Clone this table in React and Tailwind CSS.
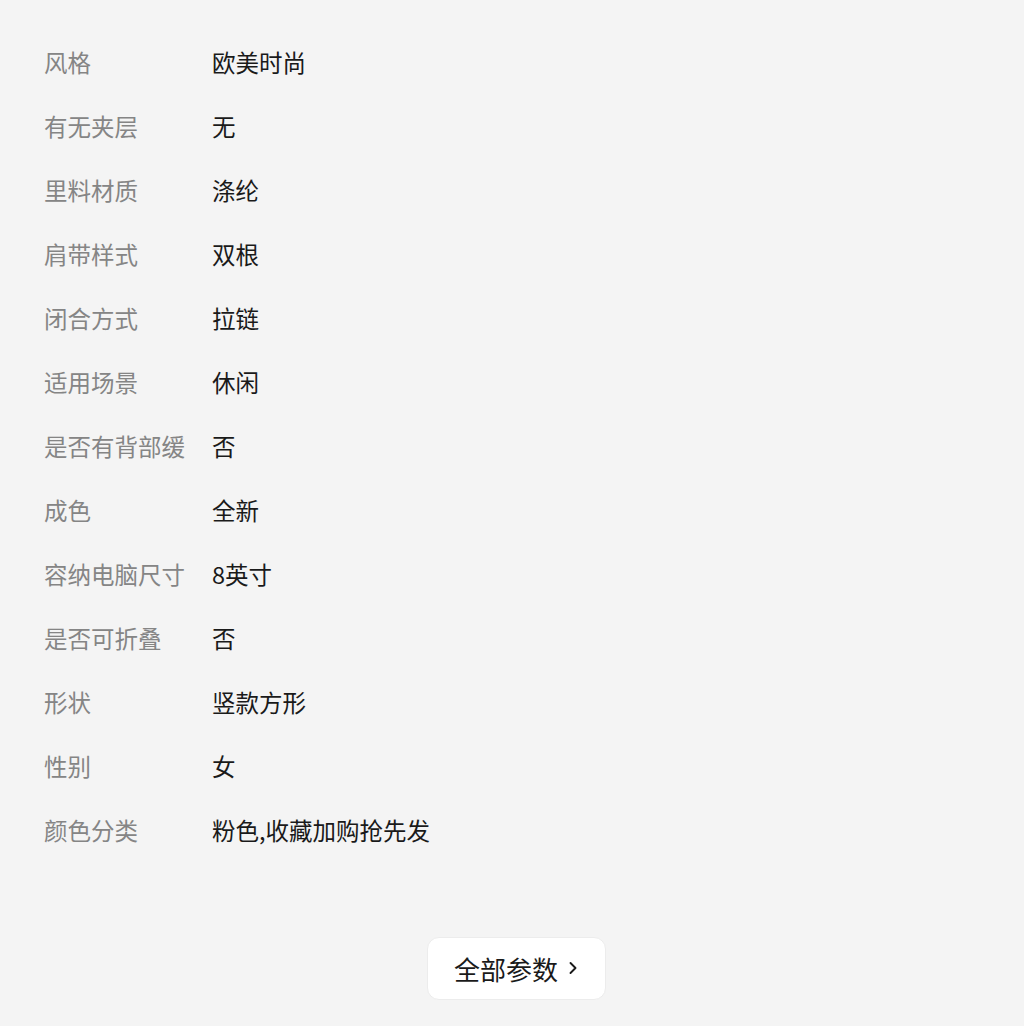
import React from 'react';

const params = [
  ['风格', '欧美时尚'],
  ['有无夹层', '无'],
  ['里料材质', '涤纶'],
  ['肩带样式', '双根'],
  ['闭合方式', '拉链'],
  ['适用场景', '休闲'],
  ['是否有背部缓', '否'],
  ['成色', '全新'],
  ['容纳电脑尺寸', '8英寸'],
  ['是否可折叠', '否'],
  ['形状', '竖款方形'],
  ['性别', '女'],
  ['颜色分类', '粉色,收藏加购抢先发'],
];

const font = { fontFamily: '"Noto Sans CJK SC", "Noto Sans", sans-serif' };

export default function App() {
  return (
    <div className="min-h-[1026px] w-full bg-[#f4f4f4] pt-[31px]" style={font}>
      <div className="pl-[44px]">
        {params.map(([label, value]) => (
          <div key={label} className="flex h-16 items-center text-[23.5px]">
            <div className="w-[168px] shrink-0 text-[#858585]">{label}</div>
            <div className="text-[#1a1a1a]">{value}</div>
          </div>
        ))}
      </div>

      {/* All params button */}
      <div className="mt-[74px] flex justify-center">
        <button className="ml-[8px] flex h-[63px] w-[179px] items-center justify-center gap-[10px] rounded-xl border border-[#ececec] bg-white text-[26px] text-[#1a1a1a]">
          <span>全部参数</span>
          <svg width="10" height="14" viewBox="0 0 10 14" fill="none" className="mt-[-2px]">
            <path d="M2.5 2l5 5-5 5" stroke="#1a1a1a" strokeWidth="1.9" strokeLinecap="round" strokeLinejoin="round" />
          </svg>
        </button>
      </div>
    </div>
  );
}
